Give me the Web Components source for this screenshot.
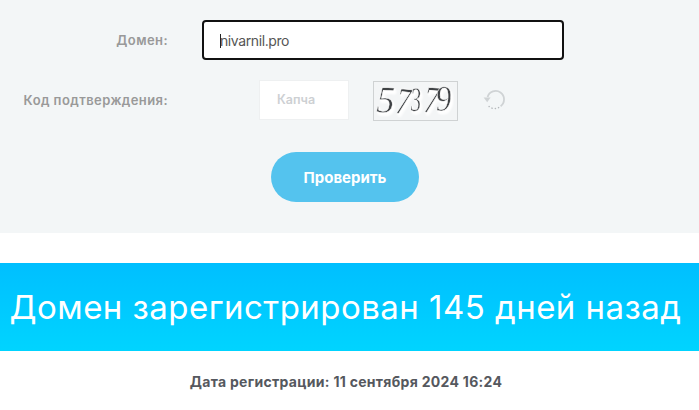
<!doctype html>
<html lang="ru">
<head>
<meta charset="utf-8">
<title>Whois</title>
<style>
  html, body { margin: 0; background: #fff; }
  body { font-family: Inter, "Open Sans", "Noto Sans", sans-serif; overflow: hidden; }
</style>
</head>
<body>
<whois-page>
  <whois-form>
    <form-row label="Домен:"><domain-input value="nivarnil.pro"></domain-input></form-row>
    <form-row label="Код подтверждения:" class="captcha"><captcha-box code="57379"></captcha-box></form-row>
    <check-button>Проверить</check-button>
  </whois-form>
  <age-banner>Домен зарегистрирован 145 дней назад</age-banner>
  <reg-date>Дата регистрации: 11 сентября 2024 16:24</reg-date>
</whois-page>

<script>
// small helper: every element below just sets its shadow markup once
class Base extends HTMLElement {
  constructor() {
    super();
    this.attachShadow({ mode: "open" });
  }
  connectedCallback() {
    this.shadowRoot.innerHTML = this.markup();
  }
}

class WhoisPage extends Base {
  markup() {
    return `<style>:host { display: block; width: 699px; height: 410px; overflow: hidden; }</style><slot></slot>`;
  }
}

class WhoisForm extends Base {
  markup() {
    return `<style>
      :host { display: flex; flex-direction: column; align-items: flex-start; gap: 20px; height: 233px; box-sizing: border-box;
        padding-top: 20px; background: #f3f6f7; margin-bottom: 30px; }
      ::slotted(check-button) { margin: 12px 0 0 271px; }
    </style><slot></slot>`;
  }
}

class FormRow extends Base {
  markup() {
    return `<style>
      :host { display: flex; align-items: center; align-self: stretch; height: 40px; }
      .label { width: 168px; flex: none; text-align: right; font-size: 13px; font-weight: 600; color: #999; letter-spacing: .42px; }
      .field { flex: 1; display: flex; align-items: center; padding-left: 34px; min-width: 0; }
      :host(.captcha) .field { padding-left: 91px; }
    </style>
    <div class="label">${this.getAttribute("label")}</div>
    <div class="field"><slot></slot></div>`;
  }
}

class DomainInput extends Base {
  markup() {
    return `<style>
      :host { display: block; }
      .box { width: 362px; height: 40px; box-sizing: border-box; border: 2px solid #111; border-radius: 4px; background: #fff;
        display: flex; align-items: center; padding-left: 16px; font-size: 14px; letter-spacing: -.4px; color: #555; position: relative; }
      .caret { position: absolute; left: 16px; top: 12px; width: 1px; height: 14px; background: #222; }
    </style>
    <div class="box"><span class="caret"></span>${this.getAttribute("value")}</div>`;
  }
}

// digit placement in the captcha image: [x, y, x scale, font size, rotation]
const DIGITS = [
  [2, 30, 0.95, 38, 3],
  [21, 31, 0.75, 38, 6],
  [37, 29, 0.62, 34, -2],
  [49, 30, 0.8, 38, 4],
  [62, 29, 0.9, 36, -3],
];

class CaptchaBox extends Base {
  markup() {
    const digits = [...this.getAttribute("code")].map((d, i) => {
      const [x, y, sx, size, rot] = DIGITS[i];
      return `<text transform="translate(${x} ${y}) rotate(${rot}) scale(${sx} 1)" font-size="${size}">${d}</text>`;
    }).join("");
    return `<style>
      :host { display: flex; align-items: center; }
      .input { width: 90px; height: 40px; box-sizing: border-box; border: 1px solid #eef0f1; background: #fff; padding-left: 17px;
        font-size: 12.5px; font-weight: 600; color: #cdd0d3; line-height: 38px; }
      .img { width: 85px; height: 40px; box-sizing: border-box; margin: 1px 0 0 24px; border: 1px solid #cfd2d3; background: #f3f5f6; display: block; overflow: visible; }
      .refresh { margin: 0 0 0 25px; display: block; }
      text { font-family: "Liberation Serif", serif; font-style: italic; fill: #3f4245; stroke: #fff; stroke-width: .55; }
      .ink { filter: drop-shadow(1px 2px 1px #fff) drop-shadow(1px 1px 0 #fff); }
    </style>
    <div class="input">Капча</div>
    <svg class="img" viewBox="0 0 83 38">
      <g class="ink">${digits}</g>
    </svg>
    <svg class="refresh" width="22" height="22" viewBox="0 0 22 22" fill="none" stroke="#cfd3d5" stroke-width="1.8">
      <path d="M4.6 8A8.4 8.4 0 1 1 17.6 17.2" />
      <path d="M15.6 18.6A8.4 8.4 0 0 1 6 17.4" stroke="#b4b8bb" stroke-width="1.5" stroke-linecap="round" stroke-dasharray=".1 3.2" />
      <path d="M.6 8.4h7l-3.4 4.8z" fill="#cfd3d5" stroke="none" />
    </svg>`;
  }
}

class CheckButton extends Base {
  markup() {
    return `<style>
      :host { display: block; }
      button { width: 148px; height: 50px; border: 0; border-radius: 25px; background: #54c3ee; color: #fff;
        font: 700 15px Inter, "Open Sans", sans-serif; padding: 0; cursor: pointer; }
    </style><button type="button"><slot></slot></button>`;
  }
}

class AgeBanner extends Base {
  markup() {
    return `<style>
      :host { display: block; height: 88px; box-sizing: border-box; padding: 23px 8px 0 0; text-align: center; color: #fff;
        background: linear-gradient(#00bfff, #00d4ff); font-size: 33px; line-height: 42px; white-space: nowrap; letter-spacing: .46px; }
    </style><slot></slot>`;
  }
}

class RegDate extends Base {
  markup() {
    return `<style>
      :host { display: block; padding: 22px 7px 0 0; text-align: center; color: #55585e; font-size: 14px; font-weight: 700; line-height: 18px; letter-spacing: .3px; }
    </style><slot></slot>`;
  }
}

customElements.define("whois-page", WhoisPage);
customElements.define("whois-form", WhoisForm);
customElements.define("form-row", FormRow);
customElements.define("domain-input", DomainInput);
customElements.define("captcha-box", CaptchaBox);
customElements.define("check-button", CheckButton);
customElements.define("age-banner", AgeBanner);
customElements.define("reg-date", RegDate);
</script>
</body>
</html>
